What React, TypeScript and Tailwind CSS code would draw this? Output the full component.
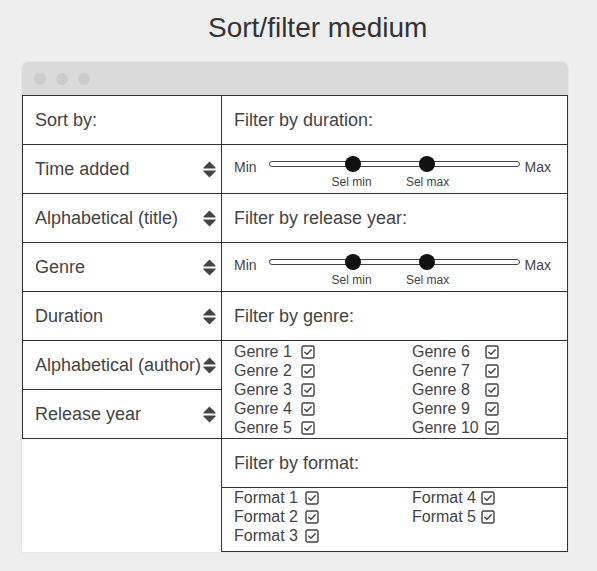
import React from 'react';

const font = "font-['Liberation_Sans',Arial,sans-serif]";

const SortIcon = () => (
  <svg width="13" height="17" viewBox="0 0 13 17" className="shrink-0">
    <path d="M6.5 0.5 L12.5 6.5 Q13 7.5 12 7.5 L1 7.5 Q0 7.5 0.5 6.5 Z" fill="#444" />
    <path d="M1 9.5 L12 9.5 Q13 9.5 12.5 10.5 L6.5 16.5 L0.5 10.5 Q0 9.5 1 9.5 Z" fill="#444" />
  </svg>
);

const CheckBox = () => (
  <svg width="14" height="14" viewBox="0 0 14 14" className="shrink-0">
    <rect x="1" y="1" width="12" height="12" rx="1.5" fill="none" stroke="#444" strokeWidth="1.4" />
    <path d="M3.8 7.2 L6 9.2 L10.2 4.8" fill="none" stroke="#444" strokeWidth="1.5" strokeLinecap="round" strokeLinejoin="round" />
  </svg>
);

const Slider = () => (
  <div className="h-[49px] border-b border-[#333] flex pl-[12px] text-[#444]">
    <span className="mt-[14px] text-[14px] leading-[16px]">Min</span>
    <div className="relative ml-[12px] mt-[16px] h-[6px] w-[251px] rounded-full border border-[#444] bg-white">
      <div className="absolute left-[75px] top-[-6px] h-4 w-4 rounded-full bg-[#111]" />
      <div className="absolute left-[149px] top-[-6px] h-4 w-4 rounded-full bg-[#111]" />
      <span className="absolute left-[82px] top-[13px] -translate-x-1/2 whitespace-nowrap text-[12px] leading-[14px]">Sel min</span>
      <span className="absolute left-[158px] top-[13px] -translate-x-1/2 whitespace-nowrap text-[12px] leading-[14px]">Sel max</span>
    </div>
    <span className="ml-[5px] mt-[14px] text-[14px] leading-[16px]">Max</span>
  </div>
);

const HeaderCell = ({ children }: { children: React.ReactNode }) => (
  <div className="h-[49px] border-b border-[#333] flex items-center pl-[12px] text-[18px] text-[#444]">
    {children}
  </div>
);

const sortOptions = ['Time added', 'Alphabetical (title)', 'Genre', 'Duration', 'Alphabetical (author)', 'Release year'];

const genresLeft = ['Genre 1', 'Genre 2', 'Genre 3', 'Genre 4', 'Genre 5'];
const genresRight = ['Genre 6', 'Genre 7', 'Genre 8', 'Genre 9', 'Genre 10'];
const formatsLeft = ['Format 1', 'Format 2', 'Format 3'];
const formatsRight = ['Format 4', 'Format 5'];

const CheckList = ({ items, labelClass }: { items: string[]; labelClass: string }) => (
  <div className="flex flex-col">
    {items.map((item) => (
      <div key={item} className="flex items-center h-[19px]">
        <span className={`${labelClass} whitespace-nowrap text-[16px] leading-[19px]`}>{item}</span>
        <CheckBox />
      </div>
    ))}
  </div>
);

export default function App() {
  return (
    <div className={`${font} min-h-[571px] w-[597px] bg-[#eeeeee]`}>
      <div className="pt-[12px] pl-[208px] text-[28px] leading-[32px] text-[#333]">Sort/filter medium</div>

      <div className="mt-[18px] ml-[22px] w-[546px] bg-white shadow-[0_0_2px_rgba(0,0,0,0.12)] rounded-t-[6px]">
        <div className="h-[33px] bg-[#dadada] rounded-t-[6px] flex items-center gap-[10px] pl-[12px]">
          <span className="h-3 w-3 rounded-full bg-[#cccccc]" />
          <span className="h-3 w-3 rounded-full bg-[#cccccc]" />
          <span className="h-3 w-3 rounded-full bg-[#cccccc]" />
        </div>

        <div className="flex border-t border-[#333]">
          {/* sort column */}
          <div className="w-[199px] self-start border-l border-[#333]">
            <HeaderCell>Sort by:</HeaderCell>
            {sortOptions.map((opt) => (
              <div key={opt} className="h-[49px] border-b border-[#333] flex items-center justify-between pl-[12px] pr-[5px] text-[18px] text-[#444]">
                <span className="whitespace-nowrap">{opt}</span>
                <SortIcon />
              </div>
            ))}
          </div>

          {/* filter column */}
          <div className="w-[347px] border-l border-r border-[#333]">
            <HeaderCell>Filter by duration:</HeaderCell>
            <Slider />
            <HeaderCell>Filter by release year:</HeaderCell>
            <Slider />
            <HeaderCell>Filter by genre:</HeaderCell>
            <div className="h-[98px] border-b border-[#333] flex pl-[12px] pt-px text-[#444]">
              <div className="w-[178px]">
                <CheckList items={genresLeft} labelClass="w-[67px]" />
              </div>
              <CheckList items={genresRight} labelClass="w-[73px]" />
            </div>
            <HeaderCell>Filter by format:</HeaderCell>
            <div className="h-[64px] border-b border-[#333] flex pl-[12px] text-[#444]">
              <div className="w-[178px]">
                <CheckList items={formatsLeft} labelClass="w-[71px]" />
              </div>
              <CheckList items={formatsRight} labelClass="w-[69px]" />
            </div>
          </div>
        </div>
      </div>
    </div>
  );
}
